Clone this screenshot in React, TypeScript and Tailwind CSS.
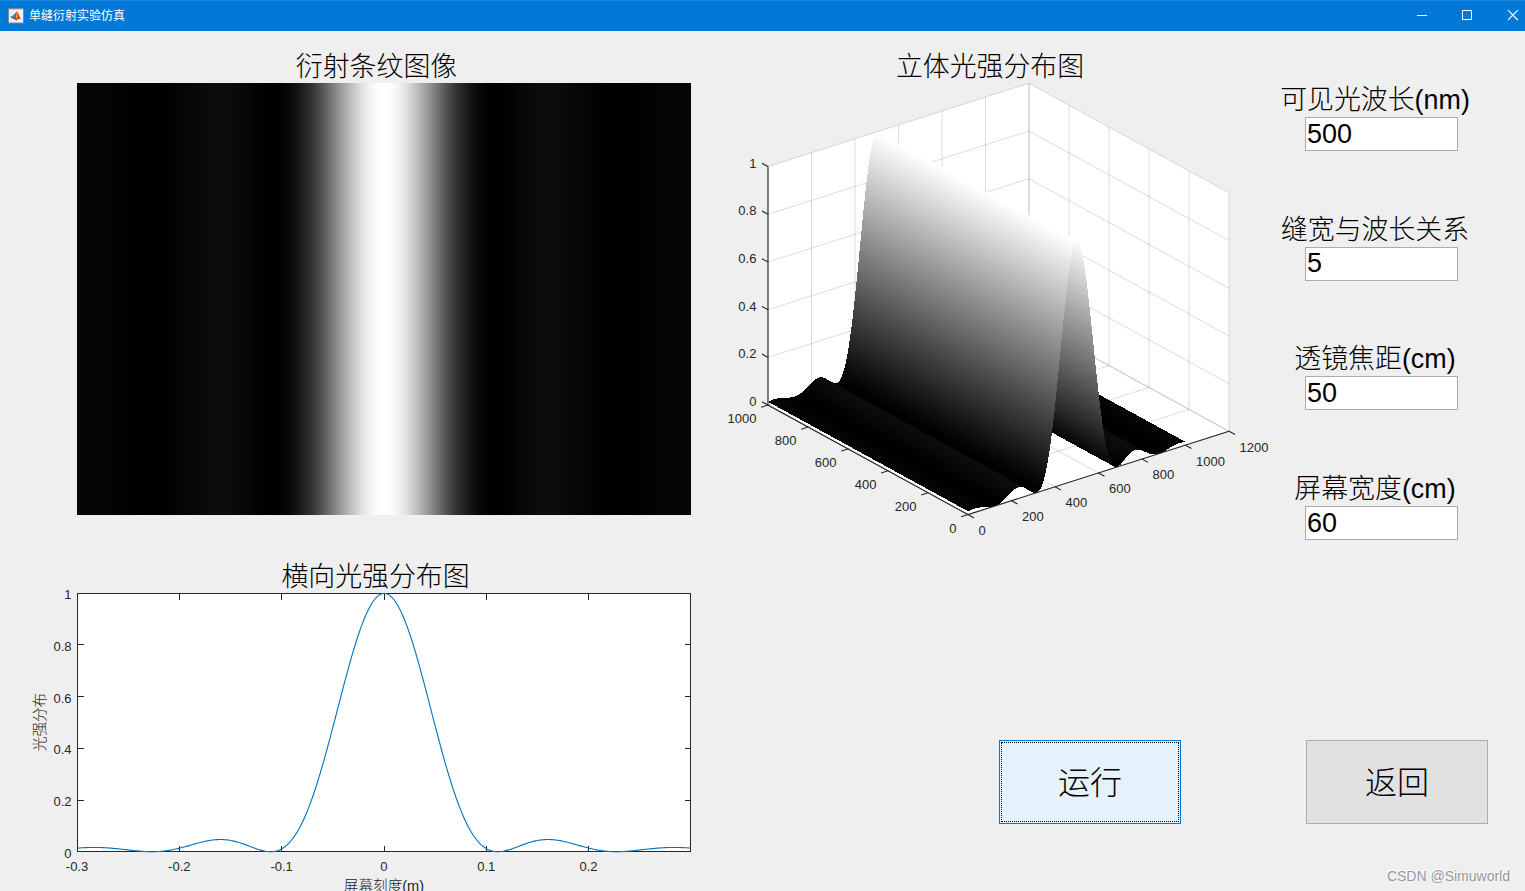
import type { ReactNode } from "react";

const FONT = "font-['Liberation_Sans','Noto_Sans_CJK_SC',sans-serif]";

// relative intensity at screen position x (metres)
const intensity = (x: number) => {
  const u = (Math.PI * x) / (0.1105 + 0.06 * x * x);
  return Math.abs(u) < 1e-6 ? 1 : (Math.sin(u) / u) ** 2;
};

const gray = (v: number) => {
  const g = Math.round(v * 255);
  return `rgb(${g},${g},${g})`;
};

const range = (n: number) => Array.from({ length: n }, (_, i) => i);

/* ---------- fringe image ---------- */
const COLS = 614;
const fringe = range(COLS)
  .map((i) => {
    const c = gray(intensity(((i + 0.5) / COLS - 0.5) * 0.6));
    return `${c} ${i}px ${i + 1}px`;
  })
  .join(",");

/* ---------- 2D curve ---------- */
const px = (x: number) => 384.2 + x * 1022;
const py = (v: number) => 851.7 - v * 258.3;
const curve = range(601)
  .map((i) => {
    const x = -0.3 + i * 0.001;
    return `${px(x).toFixed(2)},${py(intensity(x)).toFixed(2)}`;
  })
  .join(" ");

function Curve() {
  return (
    <svg viewBox="0 592 700 299" className="block h-[299px] w-[700px] overflow-visible">
      <rect x="77.5" y="593.5" width="613" height="258" fill="#fff" />
      <g stroke="#262626" fill="none" shapeRendering="crispEdges">
        <rect x="77.5" y="593.5" width="613" height="258" />
        {[179.5, 281.5, 384.5, 486.5, 588.5].map((x) => (
          <path key={x} d={`M${x} 851.5v-6M${x} 593.5v6`} />
        ))}
        {[644.5, 696.5, 748.5, 800.5].map((y) => (
          <path key={y} d={`M77.5 ${y}h6M690.5 ${y}h-6`} />
        ))}
      </g>
      <polyline points={curve} fill="none" stroke="#0072bd" strokeWidth="1.1" />
      <g fill="#262626" fontSize="13">
        {["1", "0.8", "0.6", "0.4", "0.2", "0"].map((t, i) => (
          <text key={t} x="71.5" y={599.3 + i * 51.7} textAnchor="end">{t}</text>
        ))}
        {["-0.3", "-0.2", "-0.1", "0", "0.1", "0.2"].map((t, i) => (
          <text key={t} x={77 + i * 102.3} y="871" textAnchor="middle">{t}</text>
        ))}
      </g>
      <g fill="#262626" fontSize="14.6" textAnchor="middle" className="font-light">
        <text x="384" y="891">屏幕刻度(m)</text>
        <text transform="translate(45 722) rotate(-90)">光强分布</text>
      </g>
    </svg>
  );
}

/* ---------- 3D surface ---------- */
// projects data coordinates to the drawing
const P = (x: number, y: number, z: number): [number, number] => [
  968 + (x / 1200) * 261 - (y / 1000) * 200,
  514.6 - (x / 1200) * 83.3 - (y / 1000) * 109.5 - z * 238.5,
];
const pts = (...a: [number, number][]) => a.map((p) => `${p[0].toFixed(2)},${p[1].toFixed(2)}`).join(" ");

const zAt = (x: number) => intensity(((x - 500) / 1000) * 0.6);

// strips run along y, painted from the far side to the near one;
// each reaches one step under its neighbour so that no seam shows
const strips = range(500)
  .reverse()
  .map((i) => {
    const a = i * 2;
    const edge = [a, a + 2, a + 4].filter((x) => x <= 1000);
    return {
      a,
      color: gray(zAt(a < 500 ? a + 1 : a + 3)),
      points: pts(
        ...edge.map((x) => P(x, 0, zAt(x))),
        ...[...edge].reverse().map((x) => P(x, 1000, zAt(x)))
      ),
    };
  });

const xs = [0, 200, 400, 600, 800, 1000, 1200];
const ys = [0, 200, 400, 600, 800, 1000];
const zs = [0, 0.2, 0.4, 0.6, 0.8, 1];

function Surface() {
  return (
    <svg viewBox="700 83 580 470" className="block h-[470px] w-[580px] overflow-visible">
      <polygon
        fill="#fff"
        points={pts(P(0, 0, 0), P(1200, 0, 0), P(1200, 0, 1), P(1200, 1000, 1), P(0, 1000, 1), P(0, 1000, 0))}
      />
      <g stroke="#262626" strokeOpacity="0.16" fill="none">
        {xs.map((x) => (
          <polyline key={x} points={pts(P(x, 0, 0), P(x, 1000, 0), P(x, 1000, 1))} />
        ))}
        {ys.map((y) => (
          <polyline key={y} points={pts(P(0, y, 0), P(1200, y, 0), P(1200, y, 1))} />
        ))}
        {zs.map((z) => (
          <polyline key={z} points={pts(P(0, 1000, z), P(1200, 1000, z), P(1200, 0, z))} />
        ))}
      </g>
      <g shapeRendering="crispEdges">
        {strips.map((s) => (
          <polygon key={s.a} points={s.points} fill={s.color} />
        ))}
      </g>
      <g stroke="#262626" fill="none" strokeWidth="1.1">
        <polyline points={pts(P(0, 1000, 1), P(0, 1000, 0), P(0, 0, 0), P(1200, 0, 0))} />
        {xs.map((x) => {
          const [a, b] = P(x, 0, 0);
          return <path key={x} d={`M${a} ${b}l6 3.3`} />;
        })}
        {ys.map((y) => {
          const [a, b] = P(0, y, 0);
          return <path key={y} d={`M${a} ${b}l-6.8 2.2`} />;
        })}
        {zs.map((z) => {
          const [a, b] = P(0, 1000, z);
          return <path key={z} d={`M${a} ${b}l-6 -3.3`} />;
        })}
      </g>
      <g fill="#262626" fontSize="13">
        {xs.map((x) => {
          const [a, b] = P(x, 0, 0);
          return <text key={x} x={a + 10.6} y={b + 20.4}>{x}</text>;
        })}
        {ys.map((y) => {
          const [a, b] = P(0, y, 0);
          return <text key={y} x={a - 11.6} y={b + 18.3} textAnchor="end">{y}</text>;
        })}
        {zs.map((z) => {
          const [a, b] = P(0, 1000, z);
          return <text key={z} x={a - 11.6} y={b + 0.9} textAnchor="end">{z}</text>;
        })}
      </g>
    </svg>
  );
}

function TitleBar() {
  return (
    <header className="flex h-[31px] shrink-0 items-center border-t border-[#1a86db] bg-[#0078d7] pl-2 text-white">
      <svg viewBox="0 0 16 16" className="h-4 w-4">
        <defs>
          <linearGradient id="peak" x1="0" x2="1">
            <stop offset="0" stopColor="#7a1d12" />
            <stop offset=".45" stopColor="#e0521c" />
            <stop offset="1" stopColor="#a3220f" />
          </linearGradient>
        </defs>
        <rect x=".5" y=".5" width="15" height="14.5" fill="#eef1f4" stroke="#6f8aa3" />
        <path d="M1 1.5h14" stroke="#c3d2df" />
        <path d="M2 9l3.2-1.7L8.3 4 7 9.6 5 11z" fill="#3f87a8" />
        <path d="M5 10.7C7 9.7 7.3 4.8 9 3.2c1.5 1.2 2.2 6 4.3 8.2-1.3-.6-2.1-1-3-.3-.9.6-1.4 1.5-2.3 1.7-.6-1.2-1.5-2.1-3-2.1z" fill="url(#peak)" />
        <path d="M9 3.4c-.5 2-.7 4.2-1.7 6.4l1.9.8c.5-2.4.6-4.8-.2-7.2z" fill="#f29a3c" />
      </svg>
      <h1 className="ml-[5px] text-[12px] leading-4">单缝衍射实验仿真</h1>
      <svg viewBox="1410 1 115 30" className="ml-auto h-[30px] w-[115px]" fill="none" stroke="#fff">
        <path d="M1417 15.5h10" />
        <rect x="1462.5" y="10.5" width="9" height="9" />
        <path d="M1508 10.2l9.8 9.8M1517.8 10.2l-9.8 9.8" strokeWidth="1.1" />
      </svg>
    </header>
  );
}

function Heading({ children }: { children: ReactNode }) {
  return <h2 className="h-[34px] pt-px text-center text-[26.9px] leading-[34px] font-light whitespace-nowrap">{children}</h2>;
}

const fields = [
  { label: "可见光波长(nm)", value: "500" },
  { label: "缝宽与波长关系", value: "5" },
  { label: "透镜焦距(cm)", value: "50" },
  { label: "屏幕宽度(cm)", value: "60" },
];

export default function App() {
  return (
    <div className={`relative flex h-[891px] w-[1525px] flex-col overflow-hidden bg-[#efefef] text-black ${FONT}`}>
      <TitleBar />

      <main className="flex min-h-0 flex-1">
        {/* left: fringes and cross-section */}
        <section className="w-[700px] pt-[18px]">
          <div className="pl-[53px]">
            <Heading>衍射条纹图像</Heading>
          </div>
          <div
            className="ml-[77px] h-[432px] w-[614px]"
            style={{ backgroundImage: `linear-gradient(to right,${fringe})` }}
          />
          <div className="mt-[44px] mb-[-1px] pl-[51px]">
            <Heading>横向光强分布图</Heading>
          </div>
          <Curve />
        </section>

        {/* right: surface, parameters, actions */}
        <section className="flex flex-1 flex-col">
          <div className="flex h-[709px]">
            <div className="w-[580px] pt-[18px]">
              <Heading>立体光强分布图</Heading>
              <Surface />
            </div>
            <form className="flex w-[190px] flex-col gap-[61.7px] pt-[52px]">
              {fields.map((f) => (
                <label key={f.label} className="block">
                  <span className="block h-[34px] text-center text-[26.9px] leading-[34px] font-light whitespace-nowrap">
                    {f.label}
                  </span>
                  <input
                    defaultValue={f.value}
                    className="ml-[25px] block h-[34px] w-[153px] border border-[#ababb0] bg-white pl-px text-[27px] leading-8 outline-none"
                  />
                </label>
              ))}
            </form>
          </div>

          <div className="flex gap-[125px] pl-[299px] text-[32px] font-light">
            <button className="h-[84px] w-[182px] border border-[#0078d7] bg-[#e5f1fb] p-px">
              <span className="flex h-full items-center justify-center border border-dotted border-black pt-0.5">运行</span>
            </button>
            <button className="h-[84px] w-[182px] border border-[#adadad] bg-[#e1e1e1] pt-0.5">返回</button>
          </div>
        </section>
      </main>

      <div className="absolute right-[15px] bottom-[5px] text-[14px] leading-5 text-[#999] [text-shadow:-1px_-1px_0_#fff]">
        CSDN @Simuworld
      </div>
    </div>
  );
}
